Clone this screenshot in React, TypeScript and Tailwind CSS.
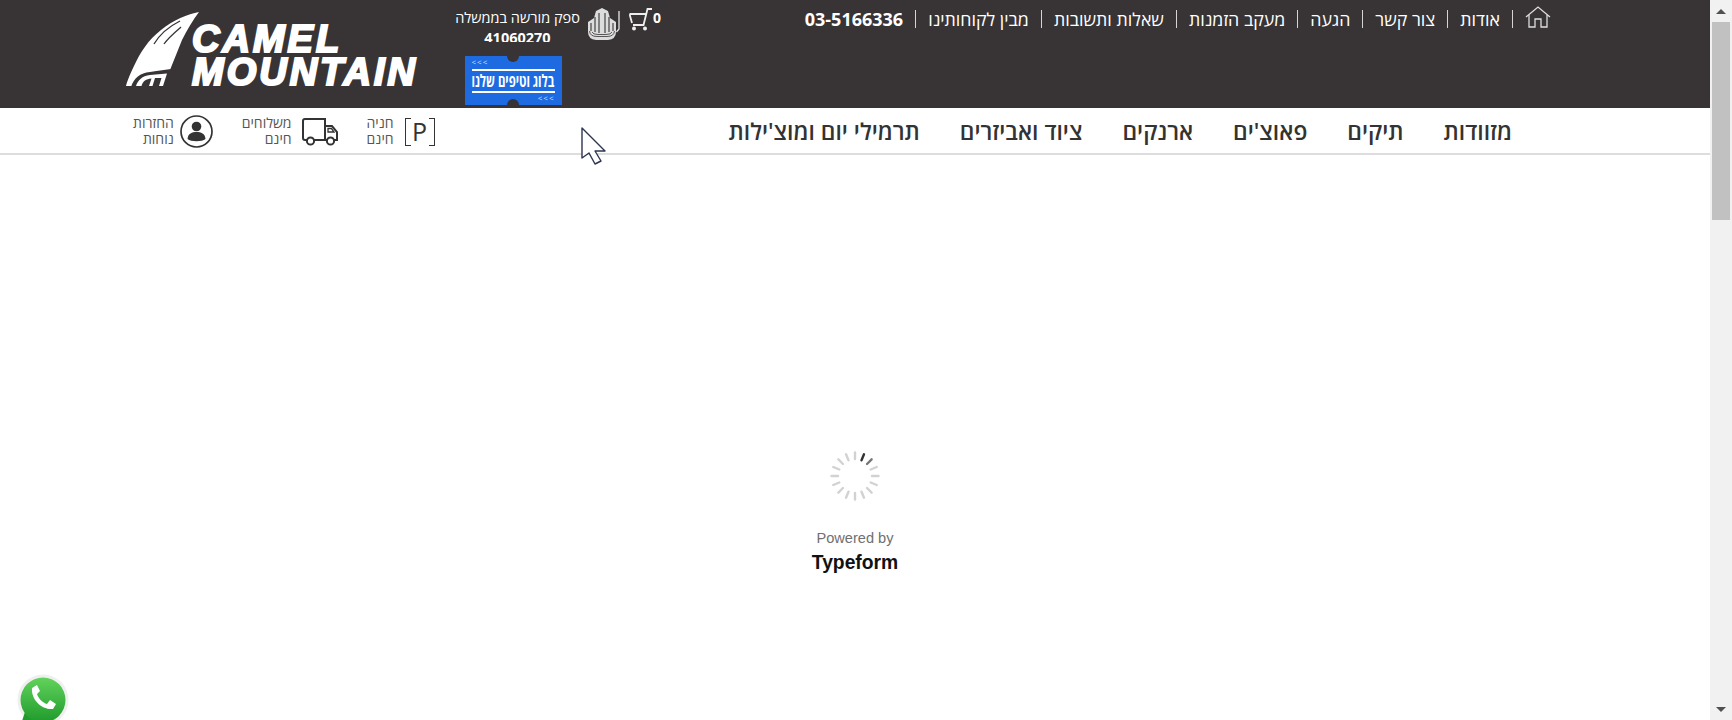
const topLinks = ['אודות', 'צור קשר', 'הגעה', 'מעקב הזמנות', 'שאלות ותשובות', 'מבין לקוחותינו'];
const navLinks = ['מזוודות', 'תיקים', "פאוצ'ים", 'ארנקים', 'ציוד ואביזרים', "תרמילי יום ומוצ'ילות"];
const ticks = Array.from({ length: 16 }, (_, i) => i);

function Feather() {
  return (
    <svg width="90" height="84" viewBox="0 0 90 84" className="shrink-0">
      <path
        d="M81 4 C70 6 55 12 43 22 C30 32 22 45 16 58 C12 66 9 74 8 78 L46 78 C48 72 50 66 52 62 C56 52 60 42 64 32 C69 22 75 12 81 4 Z"
        fill="#fff"
      />
      <path d="M62 13 C52 18 42 26 36 36" stroke="#383435" strokeWidth="1.3" fill="none" />
      <path d="M63 19 C56 25 50 30 46 36" stroke="#383435" strokeWidth="1.3" fill="none" />
      <path d="M13 79 C16 70 22 65 32 64 C38 63 46 62 53 61 L47 79 Z" fill="#383435" />
      <path d="M18 78 C20 72 24 68 32 67 L49 65.5 L45 78 H41 L43.5 70 H37 L34.5 78 H31 L33.5 70.5 C28 71 25 73 23.5 78 Z" fill="#fff" />
    </svg>
  );
}

function Emblem() {
  return (
    <svg width="34" height="32" viewBox="0 0 34 32" className="shrink-0" fill="none">
      <path d="M14 0 L20 3 L22 10 L28 14 V24 Q28 31 20 32 H8 Q0 31 0 24 V14 L6 10 L8 3 Z" fill="#dcdcdc" />
      <path d="M3 15 V23 M7 9 V24 M11 5 V25 M17 5 V25 M21 9 V24 M25 15 V23" stroke="#383435" strokeWidth="1.1" />
      <path d="M1.5 23 Q2 28.5 9 28.5 H19 Q26 28.5 26.5 23 M4 24 Q5 26.5 10 26.5 H18 Q23 26.5 24 24" stroke="#383435" strokeWidth="0.8" />
      <path d="M31 3 V21 L28.5 24" stroke="#e5e5e5" strokeWidth="1.3" />
    </svg>
  );
}

function Cart() {
  return (
    <svg width="24" height="23" viewBox="0 0 24 23" className="shrink-0" fill="none" stroke="#eee" strokeWidth="1.8">
      <path d="M23 1 H18.5 L14.5 17 H4" />
      <path d="M0.5 6 H17 M3 15 L0.5 6" />
      <circle cx="5" cy="20.5" r="2" fill="#eee" stroke="none" />
      <circle cx="16" cy="20.5" r="2" fill="#eee" stroke="none" />
    </svg>
  );
}

function BlogBadge() {
  return (
    <div className="relative mr-[9px] mt-[14px] flex h-[49px] w-[97px] flex-col items-center justify-center overflow-hidden bg-[#1e6ae0] text-white">
      <span className="absolute left-[42px] top-[-6px] size-[12px] rounded-full bg-[#383435]" />
      <span className="absolute bottom-[-6px] left-[42px] size-[12px] rounded-full bg-[#383435]" />
      <span className="absolute left-[7px] top-[1px] text-[8px] leading-[10px] tracking-[1px] text-[#cfe0ff]">{'<<<'}</span>
      <span className="absolute bottom-[2px] right-[7px] text-[8px] leading-[10px] tracking-[1px] text-[#cfe0ff]">{'<<<'}</span>
      <div className="flex h-[24px] w-[83px] items-center justify-center border-y-2 border-white">
        <span dir="rtl" className="scale-x-[0.67] text-[17px] font-bold leading-[18px] whitespace-nowrap">
          בלוג וטיפים שלנו
        </span>
      </div>
    </div>
  );
}

function Perk({ lines, children, gap }: { lines: string[]; children: React.ReactNode; gap: string }) {
  return (
    <div className={`flex items-center ${gap}`}>
      <div dir="rtl" className="text-right text-[14px] leading-[16px] text-[#555]">
        {lines.map((l) => (
          <div key={l}>{l}</div>
        ))}
      </div>
      {children}
    </div>
  );
}

function Spinner() {
  return (
    <svg width="50" height="50" viewBox="-25 -25 50 50">
      {ticks.map((i) => (
        <line
          key={i}
          x1="0"
          y1="-17"
          x2="0"
          y2="-23.5"
          strokeWidth="2.4"
          strokeLinecap="round"
          stroke={i === 1 ? '#333' : i === 2 ? '#777' : '#d2d2d2'}
          transform={`rotate(${i * 22.5})`}
        />
      ))}
    </svg>
  );
}

export default function App() {
  return (
    <div className="relative flex h-screen overflow-hidden bg-white font-['Open_Sans','Noto_Sans',sans-serif]">
      <div className="flex min-w-0 flex-1 flex-col">
        <header className="flex h-[108px] shrink-0 bg-[#383435] pl-[118px] text-white">
          <div className="flex h-[92px] w-[337px] shrink-0 items-start pt-2">
            <Feather />
            <div className="ml-[-16px] mt-[15px] font-['Liberation_Sans',sans-serif] text-[38px] font-bold italic leading-[33px] tracking-[3px] [-webkit-text-stroke:2.2px_#fff]">
              <div>CAMEL</div>
              <div className="whitespace-nowrap">MOUNTAIN</div>
            </div>
          </div>

          <div className="flex w-[125px] shrink-0 flex-col items-center">
            <div dir="rtl" className="h-[42px] overflow-hidden pt-2 text-center text-[14.5px] leading-[20px] whitespace-nowrap">
              <div>ספק מורשה בממשלה</div>
              <div className="font-bold">41060270</div>
            </div>
            <BlogBadge />
          </div>

          <div className="flex h-[40px] shrink-0 items-start gap-[7px] pl-[8px] pt-[8px]">
            <Emblem />
            <Cart />
            <span className="-ml-[7px] mt-[3px] text-[14px] font-bold leading-[14px]">0</span>
          </div>

          <div className="flex flex-1 items-start justify-end pr-[159px] pt-[8px]">
            <div className="flex items-center gap-3">
              <span className="text-[18px] font-bold leading-[22px]">03-5166336</span>
              <div dir="rtl" className="flex flex-row-reverse items-center gap-3">
                {[...topLinks].reverse().map((l) => (
                  <div key={l} className="flex flex-row-reverse items-center gap-3">
                    <span className="h-[18px] w-px bg-[#d5d5d5]" />
                    <span className="text-[17.8px] leading-[22px] whitespace-nowrap">{l}</span>
                  </div>
                ))}
                <span className="h-[18px] w-px bg-[#d5d5d5]" />
              </div>
              <svg width="26" height="22" viewBox="0 0 26 22" fill="none" stroke="#ddd" strokeWidth="1.3" className="-mt-1 shrink-0">
                <path d="M1 11 L13 1 L25 11" />
                <path d="M4 9 V21 H10 V13 H16 V21 H22 V9" />
              </svg>
            </div>
          </div>
        </header>

        <nav className="flex h-[47px] shrink-0 items-center justify-between border-b-2 border-[#ddd] pl-[133px] pr-[198px]">
          <div className="flex items-center gap-[29px]">
            <Perk lines={['החזרות', 'נוחות']} gap="gap-[6px]">
              <svg width="33" height="33" viewBox="0 0 33 33" fill="none" className="mt-[2px] shrink-0">
                <circle cx="16.5" cy="16.5" r="15.5" stroke="#333" strokeWidth="1.7" />
                <circle cx="16.5" cy="11.5" r="4.8" fill="#333" />
                <path d="M7.5 24 C8 18.5 12 17 16.5 17 C21 17 25 18.5 25.5 24 C22 27 11 27 7.5 24 Z" fill="#333" />
              </svg>
            </Perk>
            <Perk lines={['משלוחים', 'חינם']} gap="gap-[10px]">
              <svg width="36" height="28" viewBox="0 0 36 28" fill="none" stroke="#333" strokeWidth="2" className="mt-[3px] shrink-0">
                <path d="M5 22 H3 Q1 22 1 20 V3 Q1 1 3 1 H23 V22 H12" />
                <path d="M23 8 H30 L35 14 V22 H32 M23 22 H25" />
                <path d="M26 10.5 H29.5 L32 14 H26 Z" strokeWidth="1.3" />
                <circle cx="8.5" cy="23" r="3.6" />
                <circle cx="28.5" cy="23" r="3.6" />
              </svg>
            </Perk>
            <Perk lines={['חניה', 'חינם']} gap="gap-[11px]">
              <div className="relative mt-[2px] flex h-[28px] w-[30px] items-center justify-center border-x border-[#333] text-[25px] font-medium leading-none text-[#333]">
                <span className="absolute left-0 top-0 h-px w-[5px] bg-[#333]" />
                <span className="absolute bottom-0 left-0 h-px w-[5px] bg-[#333]" />
                <span className="absolute right-0 top-0 h-px w-[5px] bg-[#333]" />
                <span className="absolute bottom-0 right-0 h-px w-[5px] bg-[#333]" />
                P
              </div>
            </Perk>
          </div>
          <div dir="rtl" className="flex items-center gap-10 pt-[3px] text-[22.9px] font-semibold leading-[30px] text-[#333]">
            {navLinks.map((l) => (
              <span key={l} className="whitespace-nowrap">{l}</span>
            ))}
          </div>
        </nav>

        <main className="flex flex-1 flex-col items-center pt-[296px] font-['Liberation_Sans',sans-serif]">
          <Spinner />
          <div className="mt-[28px] text-[14.6px] leading-[18px] text-[#707070]">Powered by</div>
          <div className="mt-[3px] text-[19.3px] font-bold leading-[26px] text-[#111]">Typeform</div>
        </main>
      </div>

      <aside className="flex w-[22px] shrink-0 flex-col items-center bg-[#f1f1f1]">
        <div className="flex h-[22px] w-full items-center justify-center">
          <span className="size-0 border-x-[5px] border-b-[5px] border-x-transparent border-b-[#505050]" />
        </div>
        <div className="h-[198px] w-[18px] bg-[#c1c1c1]" />
        <div className="mt-auto flex h-[22px] w-full items-center justify-center">
          <span className="size-0 border-x-[5px] border-t-[5px] border-x-transparent border-t-[#505050]" />
        </div>
      </aside>

      <svg width="52" height="56" viewBox="0 0 52 56" className="absolute left-[17px] top-[674px]">
        <defs>
          <linearGradient id="wa" x1="0" y1="0" x2="0" y2="1">
            <stop offset="0" stopColor="#62d35c" />
            <stop offset="1" stopColor="#1f9a2c" />
          </linearGradient>
        </defs>
        <circle cx="26" cy="26" r="25.5" fill="#efefef" />
        <path d="M8 38 L3 53 L18 47 Z" fill="#1f9a2c" />
        <circle cx="26" cy="26" r="22.5" fill="url(#wa)" />
        <path d="M15 14 L20 11 L23 17 L20 20 C21 24 26 29 30 30 L33 26 L39 30 L36 35 C25 36 14 26 15 14 Z" fill="#fff" />
      </svg>

      <svg width="28" height="38" viewBox="0 0 28 38" className="absolute left-[580px] top-[127px]">
        <path d="M2 1 L2 31 L9 26 L15 37 L21 34 L15 24 L25 24 Z" fill="#fff" stroke="#2d3550" strokeWidth="1.4" strokeLinejoin="round" />
      </svg>
    </div>
  );
}
